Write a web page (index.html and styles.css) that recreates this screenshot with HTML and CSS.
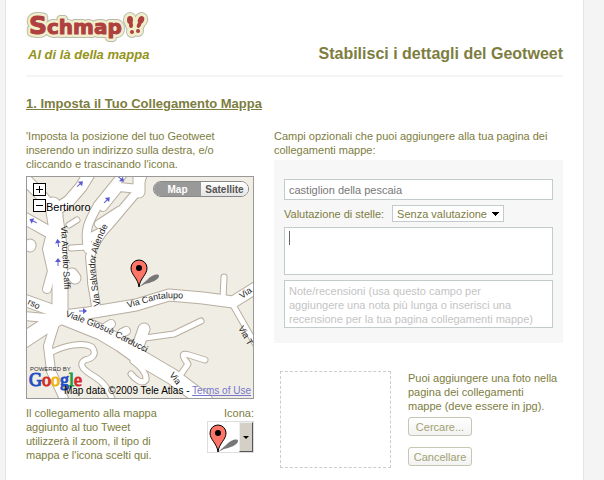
FILE: index.html
```html
<!DOCTYPE html>
<html lang="it">
<head>
  <meta charset="UTF-8" />
  <meta name="viewport" content="width=device-width, initial-scale=1.0"/>
  <title>Schmap - Dettagli del Geotweet</title>
  <link rel="stylesheet" href="styles.css">
</head>
<body>
  <div class="page">
    <header class="header">
      <div class="brand">
        <svg class="logo" width="126" height="32" viewBox="0 0 126 32" role="img" aria-label="Schmap!!">
          <defs>
            <g id="steps">
              <ellipse cx="104" cy="8" rx="3" ry="4"/>
              <ellipse cx="105" cy="13" rx="2" ry="3"/>
              <circle cx="106" cy="20" r="2"/>
              <ellipse cx="115" cy="8" rx="3" ry="4" transform="rotate(24 115 8)"/>
              <ellipse cx="113" cy="13" rx="2" ry="3" transform="rotate(24 113 13)"/>
              <circle cx="112" cy="19" r="2"/>
            </g>
          </defs>
          <g class="logo-edge">
            <text x="3" y="22"><tspan class="logo-s">S</tspan>chmap</text>
            <use href="#steps"/>
          </g>
          <g class="logo-halo">
            <text x="3" y="22"><tspan class="logo-s">S</tspan>chmap</text>
            <use href="#steps"/>
          </g>
          <g class="logo-face">
            <text x="3" y="22"><tspan class="logo-s">S</tspan>chmap</text>
            <use href="#steps"/>
          </g>
        </svg>
        <p class="tagline">Al di là della mappa</p>
      </div>
      <h1>Stabilisci i dettagli del Geotweet</h1>
    </header>

    <h2>1. Imposta il Tuo Collegamento Mappa</h2>

    <div class="columns">
      <section class="left">
        <p>'Imposta la posizione del tuo Geotweet inserendo un indirizzo sulla destra, e/o cliccando e trascinando l'icona.</p>

        <div class="map">
          <svg class="map-canvas" viewBox="0 0 226 221" preserveAspectRatio="xMidYMid slice">
            <defs>
              <g id="narrow">
                <path d="M44 71L60 70"/>
                <path d="M23 176C38 168 56 165 65 170C71 178 64 182 58 183C50 188 58 194 68 200C78 206 82 214 86 224"/>
                <path d="M118 161L147 157L174 144"/>
                <path d="M152 200L161 187C154 178 155 176 162 178L178 183"/>
                <path d="M197 100L196 122"/>
                <path d="M206 128L230 170"/>
                <path d="M106 184C114 190 120 196 119 203C115 208 108 202 104 197"/>
                <path d="M42 48L50 43"/>
              </g>
              <g id="medium">
                <path d="M24 56L20 72L25 94L20 112"/>
                <path d="M61 72C57 52 62 44 71 28L96 -3"/>
                <path d="M66 112L63 80C66 68 72 58 82 48L109 16L116 -3"/>
                <path d="M64 60L76 54"/>
                <path d="M76 30L92 10L112 12"/>
                <path d="M72 47L92 34"/>
                <path d="M65 104L70 136"/>
                <path d="M-3 139L30 142"/>
                <path d="M30 140L21 169L24 194L38 224"/>
                <path d="M79 150L84 147M95 156L99 154"/>
              </g>
              <g id="wide">
                <path d="M36 139L61 136L109 128L142 118L176 121L206 125L230 110"/>
                <path d="M-3 1L12 16L30 38"/>
                <path d="M27 34L42 24L54 10L62 -3"/>
                <path d="M-3 41L24 56"/>
                <path d="M-3 123L36 137"/>
                <path d="M112 -2L112 15"/>
                <path d="M117 152L110 172"/>
                <path d="M45 97L48 101"/>
                <path d="M3 68L3 69"/>
              </g>
              <g id="main">
                <path d="M26 28L31 60L33 106L33 138"/>
                <path d="M-3 163L32 140"/>
                <path d="M34 139L74 155L94 167L112 180L146 200L178 224"/>
              </g>
              <g id="arrow"><path class="shaft" d="M-4 0H1"/><path class="tip" d="M0 -3L4 0L0 3Z"/></g>
              <path id="allende" d="M73 129L68 92Q67 72 86 40"/>
              <path id="carducci" d="M38 139L75 153L124 178"/>
              <path id="cantalupo" d="M101 131L128 123Q140 120 164 122"/>
            </defs>
            <g class="casing">
              <use href="#narrow" class="w7"/><use href="#medium" class="w10"/>
              <use href="#wide" class="w13"/><use href="#main" class="w17"/>
            </g>
            <g class="road">
              <use href="#narrow" class="w5"/><use href="#medium" class="w8"/>
              <use href="#wide" class="w11"/><use href="#main" class="w15"/>
            </g>
            <g class="arrows">
              <use href="#arrow" transform="translate(53 7) rotate(-42)"/>
              <use href="#arrow" transform="translate(80 23) rotate(-45)"/>
              <use href="#arrow" transform="translate(94 2) rotate(40)"/>
              <use href="#arrow" transform="translate(6 44) rotate(205)"/>
              <use href="#arrow" transform="translate(31 66) rotate(-100)"/>
              <use href="#arrow" transform="translate(31 85) rotate(-90)"/>
              <use href="#arrow" transform="translate(56 134)"/>
            </g>
            <g class="street">
              <text transform="translate(34 49) rotate(87)">Via Aurelio Saffi</text>
              <text><textPath href="#allende">Via Salvador Allende</textPath></text>
              <text><textPath href="#carducci">Viale Giosuè Carducci</textPath></text>
              <text><textPath href="#cantalupo">Via Cantalupo</textPath></text>
              <text transform="translate(0 127) rotate(25)">rso</text>
              <text transform="translate(215 122) rotate(-35)">Via</text>
              <text transform="translate(211 151) rotate(60)">Via T</text>
              <text transform="translate(142 198) rotate(52)">Via</text>
            </g>
            <text class="town" x="19" y="34">Bertinoro</text>
            <text class="powered" x="3" y="194">POWERED BY</text>
            <text class="google" x="2" y="209"><tspan class="g-blue">G</tspan><tspan class="g-red">o</tspan><tspan class="g-yellow">o</tspan><tspan class="g-blue">g</tspan><tspan class="g-green">l</tspan><tspan class="g-red">e</tspan></text>
            <g id="marker" transform="translate(112 110)">
              <path class="pin-shadow" d="M0 0L8 -7C12 -12 20 -14 20 -11C20 -7 11 -4 6 -3Z"/>
              <path class="pin" d="M0 0C-1 -9 -8 -12 -8 -19A8 8 0 0 1 8 -19C8 -12 1 -9 0 0Z"/>
              <circle cx="0" cy="-19" r="3"/>
            </g>
          </svg>
          <div class="zoom">
            <button type="button" aria-label="Ingrandisci"><svg width="11" height="11" viewBox="0 0 11 11"><path d="M2 5.5H9M5.5 2V9"/></svg></button>
            <button type="button" aria-label="Riduci"><svg width="11" height="11" viewBox="0 0 11 11"><path d="M2 5.5H9"/></svg></button>
          </div>
          <div class="map-type">
            <button type="button" class="active">Map</button>
            <button type="button">Satellite</button>
          </div>
          <p class="copyright">Map data ©2009 Tele Atlas - <a href="#">Terms of Use</a></p>
        </div>

        <div class="map-note">
          <p>Il collegamento alla mappa aggiunto al tuo Tweet utilizzerà il zoom, il tipo di mappa e l'icona scelti qui.</p>
          <div class="icon-field">
            <span id="icona">Icona:</span>
            <button type="button" class="icon-picker" aria-labelledby="icona">
              <svg class="icon-preview" width="31" height="30" viewBox="0 0 31 30">
                <use href="#marker" transform="translate(-102 -80)"/>
              </svg>
              <span class="icon-arrow"></span>
            </button>
          </div>
        </div>
      </section>

      <section class="right">
        <p>Campi opzionali che puoi aggiungere alla tua pagina dei collegamenti mappe:</p>

        <form class="fields">
          <input type="text" name="luogo" aria-label="Luogo" value="castiglion della pescaia">
          <div class="rating">
            <label for="stelle">Valutazione di stelle:</label>
            <select id="stelle" name="stelle">
              <option>Senza valutazione</option>
              <option>1</option>
              <option>2</option>
              <option>3</option>
              <option>4</option>
              <option>5</option>
            </select>
          </div>
          <textarea class="cursor" name="descrizione" aria-label="Descrizione"></textarea>
          <textarea name="note" aria-label="Note" placeholder="Note/recensioni (usa questo campo per aggiungere una nota più lunga o inserisci una recensione per la tua pagina collegamenti mappe)"></textarea>
        </form>

        <div class="photo">
          <div class="photo-box"></div>
          <div class="photo-info">
            <p>Puoi aggiungere una foto nella<br>pagina dei collegamenti<br>mappe (deve essere in jpg).</p>
            <button type="button">Cercare...</button>
            <button type="button">Cancellare</button>
          </div>
        </div>
      </section>
    </div>
  </div>
</body>
</html>
```
FILE: styles.css
```css
* {
  margin: 0;
  padding: 0;
  box-sizing: border-box;
}

body {
  background-color: #f4f4f4;
  padding: 0 20px 0 5px;
  font-family: "Liberation Sans", Arial, sans-serif;
  font-size: 11px;
  line-height: 14px;
  color: #7d7d40;
}

button, input, select, textarea {
  font-family: inherit;
  font-size: 11px;
  color: inherit;
}

.page {
  min-height: 100vh;
  padding: 12px 20px;
  background-color: white;
  border: solid #e4e4e4;
  border-width: 0 1px;
}

.header {
  display: flex;
  justify-content: space-between;
  align-items: flex-end;
  padding-bottom: 11px;
  border-bottom: 2px solid #f4f4f4;
}

.logo {
  display: block;
}

.logo text {
  font-family: "DejaVu Sans", sans-serif;
  font-weight: bold;
  font-size: 20px;
}

.logo .logo-s {
  font-size: 25px;
}

.logo-edge, .logo-halo {
  stroke-linejoin: round;
}

.logo-edge {
  fill: #b9b9ac;
  stroke: #b9b9ac;
  stroke-width: 8px;
}

.logo-halo {
  fill: #f1efcb;
  stroke: #f1efcb;
  stroke-width: 6px;
}

.logo-face {
  fill: #ae403f;
}

.logo-face text {
  stroke: #ae403f;
  stroke-linejoin: round;
}

.tagline {
  padding: 3px 2px 1px;
  font-size: 13px;
  line-height: 16px;
  font-weight: bold;
  font-style: italic;
  color: #94941a;
}

h1 {
  font-size: 16px;
  line-height: 20px;
}

h2 {
  margin: 20px 0 18px;
  font-size: 13px;
  line-height: 14px;
  text-decoration: underline;
}

.columns {
  display: grid;
  grid-template-columns: 228px 1fr;
  gap: 20px;
}

/* mappa */

.map {
  position: relative;
  height: 223px;
  margin: 5px 0 7px;
  border: 1px solid #999;
  background-color: #f0ede5;
  overflow: hidden;
}

.map-canvas {
  display: block;
  width: 100%;
  height: 100%;
}

.casing, .road {
  fill: none;
  stroke-linecap: round;
  stroke-linejoin: round;
}

.casing { stroke: #b8ae9f; }
.road { stroke: white; }

.w5 { stroke-width: 5px; }
.w7 { stroke-width: 7px; }
.w8 { stroke-width: 8px; }
.w10 { stroke-width: 10px; }
.w11 { stroke-width: 11px; }
.w13 { stroke-width: 13px; }
.w15 { stroke-width: 15px; }
.w17 { stroke-width: 17px; }

.shaft { stroke: #5a5ad0; }
.tip { fill: #5a5ad0; }

.street text {
  font-size: 9px;
  fill: #222;
}

.town {
  font-size: 11px;
  fill: black;
}

.powered {
  font-size: 6px;
  fill: #333;
}

.google {
  font-family: "Liberation Serif", serif;
  font-size: 18px;
}

.g-blue { fill: #1f50c4; stroke: #1f50c4; }
.g-red { fill: #d52b2b; stroke: #d52b2b; }
.g-yellow { fill: #efb70c; stroke: #efb70c; }
.g-green { fill: #1f9c3c; stroke: #1f9c3c; }

.pin {
  fill: #fd7567;
  stroke: black;
}

.pin-shadow {
  fill: #777;
}

.zoom {
  position: absolute;
  top: 6px;
  left: 6px;
  display: flex;
  flex-direction: column;
  gap: 3px;
}

.zoom button {
  width: 13px;
  height: 13px;
  border: 1px solid black;
  background-color: white;
}

.zoom svg {
  display: block;
  fill: none;
  stroke: black;
}

.map-type {
  position: absolute;
  top: 4px;
  right: 4px;
  display: flex;
  border: 1px solid #888;
  border-radius: 8px;
  overflow: hidden;
}

.map-type button {
  width: 47px;
  height: 14px;
  border: none;
  background-image: linear-gradient(white, #e4e4e4);
  font-size: 10px;
  font-weight: bold;
  color: #555;
}

.map-type .active {
  background: #999;
  color: white;
}

.copyright {
  position: absolute;
  right: 2px;
  bottom: 0;
  font-size: 10px;
  color: black;
  white-space: nowrap;
}

.copyright a {
  color: #7777cc;
}

.map-note {
  display: grid;
  grid-template-columns: 1fr 48px;
  gap: 40px;
}

.icon-field {
  display: flex;
  flex-direction: column;
  align-items: flex-end;
  gap: 1px;
}

.icon-picker {
  display: flex;
  border: 1px solid #ddd;
  background-color: white;
}

.icon-arrow {
  display: grid;
  place-items: center;
  width: 14px;
  border: 1px solid;
  border-color: #eee #555 #555 #eee;
  background-color: #d4d0c8;
}

.icon-arrow::after {
  content: "";
  border: 3px solid transparent;
  border-top-color: black;
  border-bottom: none;
}

/* campi opzionali */

.fields {
  display: flex;
  flex-direction: column;
  gap: 5px;
  margin: 3px 0 28px;
  padding: 19px 10px 15px;
  background-color: #f7f7f7;
}

.fields input, .fields textarea, .fields select {
  border: 1px solid #c3cccc;
  background-color: white;
}

.fields input, .fields textarea {
  width: 100%;
  padding: 3px 4px;
  line-height: 14px;
  color: #777;
}

.fields input {
  height: 21px;
}

.fields textarea {
  display: block;
  height: 48px;
  padding-right: 16px;
  resize: none;
  overflow: hidden;
}

.fields ::placeholder {
  color: #c4c4c4;
}

.fields .cursor {
  background: white linear-gradient(#666, #666) 4px 3px / 1px 14px no-repeat;
}

.rating {
  display: flex;
  align-items: center;
  gap: 8px;
}

.fields select {
  appearance: none;
  height: 17px;
  padding: 0 16px 0 4px;
  background: white conic-gradient(from -45deg at 50% 100%, black 90deg, transparent 0) right 4px center / 7px 4px no-repeat;
}

.photo {
  display: flex;
  gap: 17px;
  padding-left: 6px;
}

.photo-box {
  flex: none;
  width: 111px;
  height: 97px;
  border: 1px dashed #ccc;
}

.photo-info {
  display: flex;
  flex-direction: column;
  align-items: flex-start;
  gap: 11px;
}

.photo-info p {
  margin-bottom: -7px;
}

.photo-info button {
  width: 64px;
  height: 19px;
  border: 1px solid #c6c6b4;
  border-radius: 3px;
  background-image: linear-gradient(white, #f2f2f2);
  color: #a2a272;
}
```
